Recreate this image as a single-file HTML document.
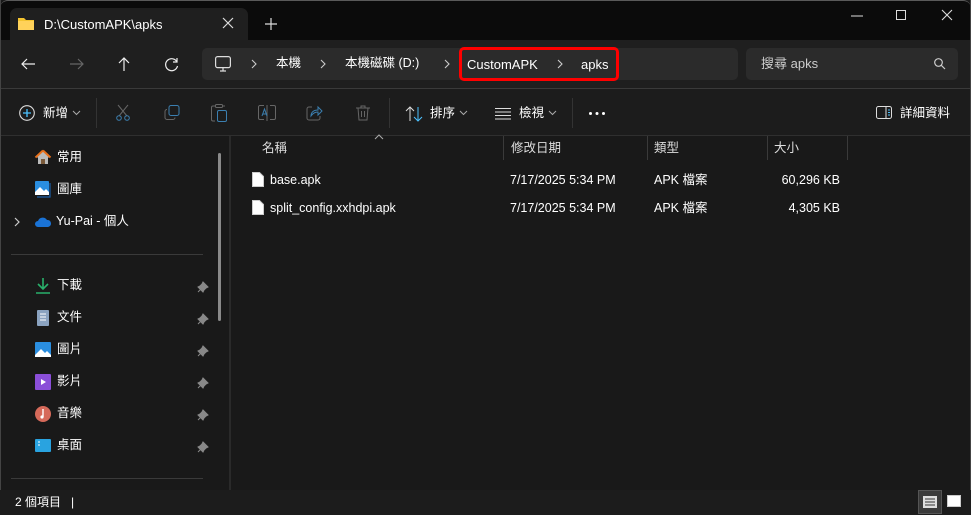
<!DOCTYPE html>
<html><head><meta charset="utf-8"><style>
*{margin:0;padding:0;box-sizing:border-box}
body{width:971px;height:515px;background:#191919;font-family:"Liberation Sans","Noto Sans CJK TC",sans-serif;color:#fff;font-size:12.5px;position:relative;overflow:hidden}
.a{position:absolute}
.t{position:absolute;white-space:nowrap;line-height:15px}
svg{position:absolute;overflow:visible}
</style></head><body>
<div class="a" style="left:0;top:0;width:971px;height:40px;background:#0b0b0b;border-top:1px solid #5a5a5a;border-radius:8px 8px 0 0"></div>
<div class="a" style="left:10px;top:8px;width:238px;height:33px;background:#1f1f1f;border-radius:7px 7px 0 0"></div>
<div class="a" style="left:0;top:40px;width:971px;height:48px;background:#1f1f1f"></div>
<div class="a" style="left:0;top:88px;width:971px;height:1px;background:#3a3a3a"></div>
<div class="a" style="left:0;top:89px;width:971px;height:46px;background:#1c1c1c"></div>
<div class="a" style="left:0;top:135px;width:971px;height:1px;background:#2f2f2f"></div>
<div class="a" style="left:0;top:0;width:1px;height:515px;background:#444"></div>
<div class="a" style="left:970px;top:0;width:1px;height:515px;background:#444"></div>
<!-- tab -->
<svg width="16" height="13" style="left:18px;top:17px"><path d="M0 1h6l2 2h8v10H0z" fill="#f4c430"/><path d="M0 4h16v9H0z" fill="#ffd25a"/></svg>
<div class="t" style="left:44px;top:17px;font-size:13px">D:\CustomAPK\apks</div>
<svg width="10" height="10" style="left:223px;top:18px"><path d="M0 0L10 10M10 0L0 10" stroke="#ddd" stroke-width="1.2"/></svg>
<svg width="12" height="12" style="left:265px;top:18px"><path d="M6 0V12M0 6H12" stroke="#ddd" stroke-width="1.2"/></svg>
<svg width="12" height="2" style="left:851px;top:15px"><path d="M0 1H12" stroke="#ddd"/></svg>
<svg width="10" height="10" style="left:896px;top:10px"><rect x=".5" y=".5" width="9" height="9" fill="none" stroke="#ddd"/></svg>
<svg width="10" height="10" style="left:942px;top:10px"><path d="M0 0L10 10M10 0L0 10" stroke="#ddd" stroke-width="1.1"/></svg>
<!-- nav -->
<svg width="14" height="12" style="left:21px;top:58px"><path d="M14 6H1M6 1L1 6l5 5" stroke="#eee" fill="none" stroke-width="1.2"/></svg>
<svg width="14" height="12" style="left:70px;top:58px"><path d="M0 6H13M8 1l5 5-5 5" stroke="#666" fill="none" stroke-width="1.2"/></svg>
<svg width="12" height="14" style="left:118px;top:57px"><path d="M6 14V1M1 6l5-5 5 5" stroke="#eee" fill="none" stroke-width="1.2"/></svg>
<svg width="14" height="14" style="left:165px;top:57px"><path d="M12 5A6 6 0 1 0 12.5 9M12 1v4H8" stroke="#eee" fill="none" stroke-width="1.2"/></svg>
<div class="a" style="left:202px;top:48px;width:536px;height:32px;background:#2b2b2b;border-radius:5px"></div>
<svg width="16" height="16" style="left:215px;top:56px"><rect x=".6" y=".6" width="14.8" height="11" rx="2" fill="none" stroke="#ddd" stroke-width="1.2"/><path d="M5 15h6M8 12v3" stroke="#ddd" stroke-width="1.2"/></svg>
<svg width="4" height="8" style="left:252px;top:60px"><path d="M0 0l4 4-4 4" fill="none" stroke="#ccc" stroke-width="1.1"/></svg>
<div class="t" style="left:276px;top:56px">本機</div>
<svg width="4" height="8" style="left:321px;top:60px"><path d="M0 0l4 4-4 4" fill="none" stroke="#ccc" stroke-width="1.1"/></svg>
<div class="t" style="left:345px;top:56px">本機磁碟 (D:)</div>
<svg width="4" height="8" style="left:445px;top:60px"><path d="M0 0l4 4-4 4" fill="none" stroke="#ccc" stroke-width="1.1"/></svg>
<div class="a" style="left:459px;top:47px;width:160px;height:34px;border:3px solid #f00;border-radius:5px"></div>
<div class="t" style="left:467px;top:57px;font-size:13px">CustomAPK</div>
<svg width="4" height="8" style="left:558px;top:60px"><path d="M0 0l4 4-4 4" fill="none" stroke="#ccc" stroke-width="1.1"/></svg>
<div class="t" style="left:581px;top:57px;font-size:13px">apks</div>
<div class="a" style="left:746px;top:48px;width:212px;height:32px;background:#2b2b2b;border-radius:5px"></div>
<div class="t" style="left:761px;top:56px;color:#ccc;font-size:13px">搜尋 apks</div>
<svg width="11" height="11" style="left:934px;top:58px"><circle cx="4.5" cy="4.5" r="3.8" fill="none" stroke="#ccc" stroke-width="1.2"/><path d="M7.3 7.3L11 11" stroke="#ccc" stroke-width="1.2"/></svg>
<!-- toolbar -->
<svg width="16" height="16" style="left:19px;top:105px"><circle cx="8" cy="8" r="7.3" fill="none" stroke="#ddd" stroke-width="1.1"/><path d="M8 4v8M4 8h8" stroke="#4cc2ff" stroke-width="1.3"/></svg>
<div class="t" style="left:43px;top:106px">新增</div>
<svg width="7" height="4" style="left:73px;top:111px"><path d="M0 0l3.5 3.5L7 0" fill="none" stroke="#aaa"/></svg>
<div class="a" style="left:96px;top:98px;width:1px;height:30px;background:#333"></div>
<svg width="14" height="16" style="left:116px;top:105px"><path d="M2 0l9 11M12 0L3 11" stroke="#666" stroke-width="1"/><circle cx="3" cy="13" r="2.3" fill="none" stroke="#3b7fb0"/><circle cx="11" cy="13" r="2.3" fill="none" stroke="#3b7fb0"/></svg>
<svg width="16" height="16" style="left:164px;top:105px"><rect x="5" y=".5" width="10" height="10" rx="2" fill="none" stroke="#3b7fb0"/><path d="M3 4.5A2 2 0 0 0 1 6.5v6A2 2 0 0 0 3 14.5h6A2 2 0 0 0 11 12.5" fill="none" stroke="#666"/></svg>
<svg width="16" height="18" style="left:211px;top:104px"><path d="M4 2H2A1.5 1.5 0 0 0 .5 3.5v12A1.5 1.5 0 0 0 2 17h2M12 2h2" fill="none" stroke="#666"/><rect x="4.5" y=".5" width="7" height="3" rx="1" fill="none" stroke="#666"/><rect x="6.5" y="6.5" width="9" height="11" rx="1.5" fill="none" stroke="#3b7fb0"/></svg>
<svg width="18" height="16" style="left:258px;top:105px"><path d="M6 .5H2A1.5 1.5 0 0 0 .5 2v11A1.5 1.5 0 0 0 2 14.5h4M12 .5h4A1.5 1.5 0 0 1 17.5 2v11a1.5 1.5 0 0 1-1.5 1.5h-4M9 0v16" fill="none" stroke="#666"/><path d="M4 11l2.5-7 2.5 7M5 9h3" stroke="#3b7fb0" fill="none"/></svg>
<svg width="16" height="16" style="left:306px;top:105px"><path d="M6 2H3A2 2 0 0 0 1 4v9a2 2 0 0 0 2 2h9a2 2 0 0 0 2-2v-2" fill="none" stroke="#666"/><path d="M5 11c0-4 3-6 7-6V2l4 4-4 4V7c-3 0-5 1-7 4z" fill="none" stroke="#3b7fb0"/></svg>
<svg width="14" height="16" style="left:356px;top:105px"><path d="M0 3h14M5 3V1h4v2M2 3l1 12h8l1-12M5.5 6v6M8.5 6v6" fill="none" stroke="#666"/></svg>
<div class="a" style="left:389px;top:98px;width:1px;height:30px;background:#333"></div>
<svg width="16" height="16" style="left:406px;top:106px"><path d="M4 15V1M0 5l4-4 4 4" fill="none" stroke="#ddd"/><path d="M12 1v14M8 11l4 4 4-4" fill="none" stroke="#4cc2ff"/></svg>
<div class="t" style="left:430px;top:106px">排序</div>
<svg width="7" height="4" style="left:460px;top:111px"><path d="M0 0l3.5 3.5L7 0" fill="none" stroke="#aaa"/></svg>
<svg width="16" height="12" style="left:495px;top:108px"><path d="M0 .5h16M0 4h16M0 7.5h16M0 11h16" stroke="#ddd"/></svg>
<div class="t" style="left:519px;top:106px">檢視</div>
<svg width="7" height="4" style="left:549px;top:111px"><path d="M0 0l3.5 3.5L7 0" fill="none" stroke="#aaa"/></svg>
<div class="a" style="left:572px;top:98px;width:1px;height:30px;background:#333"></div>
<svg width="16" height="3" style="left:589px;top:112px"><circle cx="1.5" cy="1.5" r="1.5" fill="#fff"/><circle cx="8" cy="1.5" r="1.5" fill="#fff"/><circle cx="14.5" cy="1.5" r="1.5" fill="#fff"/></svg>
<svg width="16" height="14" style="left:876px;top:106px"><rect x=".5" y=".5" width="15" height="12" rx="2" fill="none" stroke="#ddd"/><path d="M10 1v11" stroke="#ddd"/><path d="M12 4h2M12 6.5h2M12 9h2" stroke="#4cc2ff"/></svg>
<div class="t" style="left:900px;top:106px">詳細資料</div>
<!-- sidebar -->
<div class="a" style="left:229px;top:136px;width:2px;height:354px;background:#2a2a2a"></div>
<div class="a" style="left:218px;top:153px;width:3px;height:168px;background:#8a8a8a;border-radius:2px"></div>
<svg width="16" height="15" style="left:35px;top:150px"><path d="M8 1L1 7.5h2V14h10V7.5h2z" fill="#bbb"/><path d="M8 .5L.5 7.5M8 .5l7.5 7" stroke="#e8711c" stroke-width="2"/><rect x="6" y="9" width="4" height="5" fill="#7a5a3a"/></svg>
<div class="t" style="left:57px;top:150px">常用</div>
<svg width="16" height="16" style="left:35px;top:181px"><rect x="0" y="0" width="14" height="14" rx="1" fill="#2a8ee0"/><path d="M0 11l5-5 4 4 2-2 3 3v3H0z" fill="#fff"/><path d="M15 2v14H2" stroke="#1b5fa8" fill="none" stroke-width="1.2"/></svg>
<div class="t" style="left:57px;top:182px">圖庫</div>
<svg width="4" height="8" style="left:15px;top:218px"><path d="M0 0l4 4-4 4" fill="none" stroke="#ccc" stroke-width="1.2"/></svg>
<svg width="16" height="10" style="left:35px;top:217px"><path d="M3 10A3 3 0 0 1 3 4 5 5 0 0 1 12 3a3.5 3.5 0 0 1 1 7z" fill="#1a73d6"/></svg>
<div class="t" style="left:56px;top:214px">Yu-Pai - 個人</div>
<div class="a" style="left:11px;top:254px;width:192px;height:1px;background:#3a3a3a"></div>
<svg width="14" height="16" style="left:36px;top:278px"><path d="M7 0v11M2 6l5 5 5-5M0 15h14" fill="none" stroke="#29b06b" stroke-width="1.6"/></svg>
<div class="t" style="left:57px;top:278px">下載</div>
<svg width="12" height="16" style="left:37px;top:310px"><rect width="12" height="16" rx="1" fill="#8ba3c0"/><path d="M3 4h6M3 7h6M3 10h6" stroke="#fff"/></svg>
<div class="t" style="left:57px;top:310px">文件</div>
<svg width="16" height="15" style="left:35px;top:342px"><rect width="16" height="15" rx="1" fill="#2a8ee0"/><path d="M0 13l6-6 4 4 2-2 4 4v2H0z" fill="#fff"/></svg>
<div class="t" style="left:57px;top:342px">圖片</div>
<svg width="16" height="16" style="left:35px;top:374px"><rect width="16" height="16" rx="1" fill="#8a4ed8"/><path d="M6 5v6l5-3z" fill="#fff"/></svg>
<div class="t" style="left:57px;top:374px">影片</div>
<svg width="16" height="16" style="left:35px;top:406px"><circle cx="8" cy="8" r="8" fill="#d66a5a"/><path d="M8 3v8" stroke="#fff" stroke-width="1.4"/><circle cx="7" cy="11" r="1.6" fill="#fff"/></svg>
<div class="t" style="left:57px;top:406px">音樂</div>
<svg width="16" height="13" style="left:35px;top:439px"><rect width="16" height="13" rx="1" fill="#29a3e0"/><path d="M3 3h2M3 6h2" stroke="#fff"/></svg>
<div class="t" style="left:57px;top:438px">桌面</div>
<div class="a" style="left:11px;top:478px;width:192px;height:1px;background:#3a3a3a"></div>
<!-- pins -->
<svg width="10" height="10" style="left:198px;top:282px"><path d="M5 0l5 5-2 1-2 2-1 2L0 5l2-1 2-2zM3 7L0 10" fill="#888" stroke="#888"/></svg>
<svg width="10" height="10" style="left:198px;top:314px"><path d="M5 0l5 5-2 1-2 2-1 2L0 5l2-1 2-2zM3 7L0 10" fill="#888" stroke="#888"/></svg>
<svg width="10" height="10" style="left:198px;top:346px"><path d="M5 0l5 5-2 1-2 2-1 2L0 5l2-1 2-2zM3 7L0 10" fill="#888" stroke="#888"/></svg>
<svg width="10" height="10" style="left:198px;top:378px"><path d="M5 0l5 5-2 1-2 2-1 2L0 5l2-1 2-2zM3 7L0 10" fill="#888" stroke="#888"/></svg>
<svg width="10" height="10" style="left:198px;top:410px"><path d="M5 0l5 5-2 1-2 2-1 2L0 5l2-1 2-2zM3 7L0 10" fill="#888" stroke="#888"/></svg>
<svg width="10" height="10" style="left:198px;top:442px"><path d="M5 0l5 5-2 1-2 2-1 2L0 5l2-1 2-2zM3 7L0 10" fill="#888" stroke="#888"/></svg>
<!-- headers -->
<svg width="8" height="4" style="left:375px;top:135px"><path d="M0 4l4-4 4 4" fill="none" stroke="#aaa"/></svg>
<div class="t" style="left:262px;top:141px;color:#ddd">名稱</div>
<div class="a" style="left:503px;top:136px;width:1px;height:24px;background:#3a3a3a"></div>
<div class="t" style="left:511px;top:141px;color:#ddd">修改日期</div>
<div class="a" style="left:647px;top:136px;width:1px;height:24px;background:#3a3a3a"></div>
<div class="t" style="left:654px;top:141px;color:#ddd">類型</div>
<div class="a" style="left:767px;top:136px;width:1px;height:24px;background:#3a3a3a"></div>
<div class="t" style="left:774px;top:141px;color:#ddd">大小</div>
<div class="a" style="left:847px;top:136px;width:1px;height:24px;background:#3a3a3a"></div>
<svg width="12" height="15" style="left:252px;top:172px"><path d="M.5.5h7l4 4v10H.5z" fill="#fff" stroke="#ccc"/></svg>
<div class="t" style="left:270px;top:173px">base.apk</div>
<div class="t" style="left:510px;top:173px">7/17/2025 5:34 PM</div>
<div class="t" style="left:654px;top:173px">APK 檔案</div>
<div class="t" style="left:771px;top:173px;width:69px;text-align:right">60,296 KB</div>
<svg width="12" height="15" style="left:252px;top:200px"><path d="M.5.5h7l4 4v10H.5z" fill="#fff" stroke="#ccc"/></svg>
<div class="t" style="left:270px;top:201px">split_config.xxhdpi.apk</div>
<div class="t" style="left:510px;top:201px">7/17/2025 5:34 PM</div>
<div class="t" style="left:654px;top:201px">APK 檔案</div>
<div class="t" style="left:771px;top:201px;width:69px;text-align:right">4,305 KB</div>
<!-- status -->
<div class="a" style="left:0;top:490px;width:971px;height:25px;background:#1c1c1c"></div>
<div class="t" style="left:15px;top:495px;font-size:12px">2 個項目&nbsp;&nbsp;&nbsp;|</div>
<div class="a" style="left:918px;top:490px;width:24px;height:24px;background:#3a3a3a;border:1px solid #555"></div>
<svg width="14" height="12" style="left:923px;top:496px"><rect width="14" height="12" fill="#ddd"/><path d="M2 3h10M2 6h10M2 9h10" stroke="#333"/></svg>
<svg width="14" height="12" style="left:947px;top:495px"><rect x=".5" y=".5" width="13" height="11" fill="#fff" stroke="#ccc"/></svg>
</body></html>
